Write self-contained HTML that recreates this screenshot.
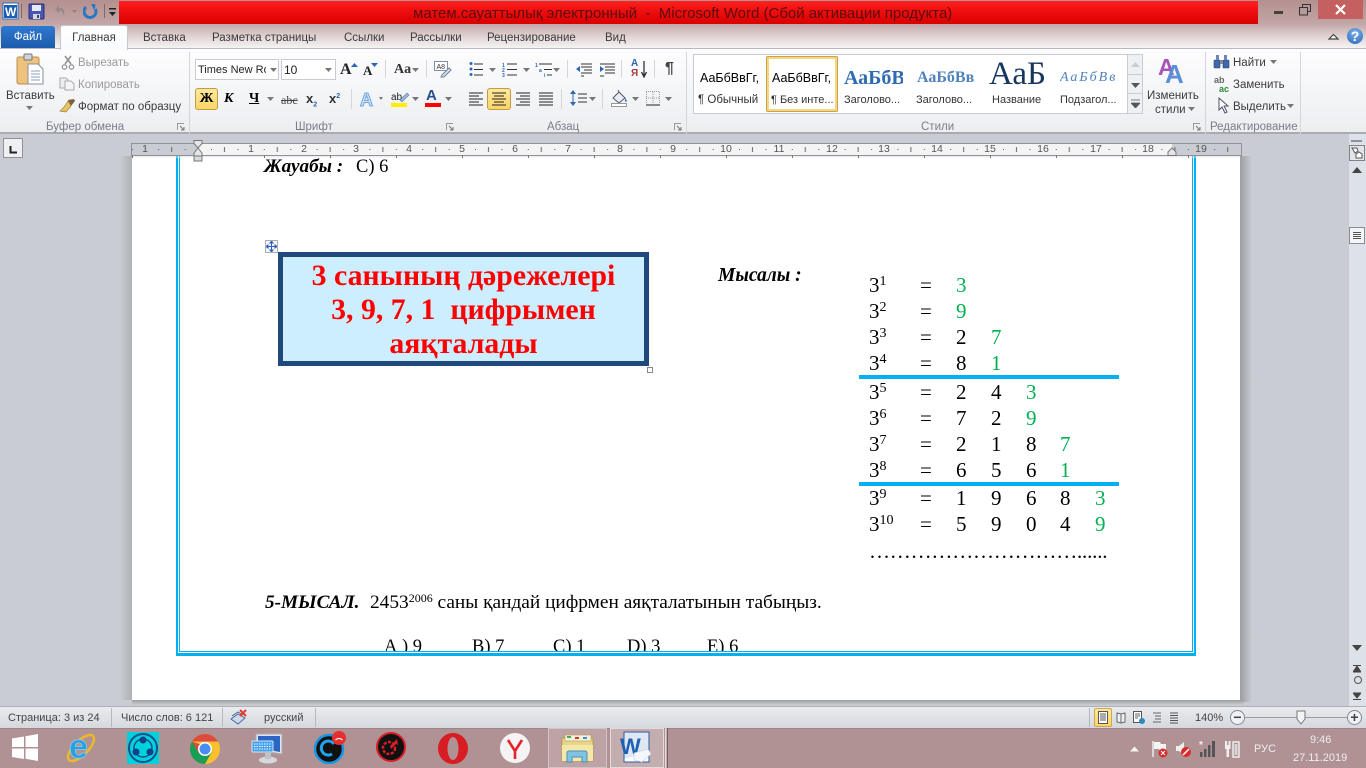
<!DOCTYPE html>
<html lang="ru"><head><meta charset="utf-8"><title>Word</title>
<style>
html,body{margin:0;padding:0;width:1366px;height:768px;overflow:hidden;background:#c9ccd2}
body{position:relative;font-family:"Liberation Sans","DejaVu Sans",sans-serif;font-size:11.5px;color:#3b3b3b}
.a,.t,svg{position:absolute}
.t{white-space:nowrap;line-height:14px}
.g{color:#9a9a9a}
.s{font-family:"Liberation Serif",serif;color:#000;white-space:nowrap;position:absolute;line-height:24px}
.n{font-size:21px}
.n sup{font-size:14px;line-height:0;vertical-align:7px}
.gr{color:#00b050}
.rn{position:absolute;top:143px;font-size:10.5px;line-height:12px;width:16px;text-align:center;color:#555}
.dv{position:absolute;top:52px;height:82px;width:1px;background:#d4d6da}
.lab{position:absolute;top:120px;line-height:14px;font-size:11.5px;color:#7a7e85;white-space:nowrap}
.st{position:absolute;top:93px;line-height:14px;font-size:11.500px;color:#333;white-space:nowrap}
.ch{position:absolute;top:70px;line-height:16px;font-size:12.500px;color:#000;white-space:nowrap}
</style></head><body>

<!-- title + tab band -->
<div class="a" style="left:0;top:0;width:1366px;height:48px;background:linear-gradient(#b4908f 0,#c2a6a6 24px,#e0d2d2 36px,#f5f3f3 48px)"></div>
<div class="a" style="left:119px;top:1px;width:1139px;height:23px;background:linear-gradient(#ff2020,#f01010 40%,#d80000)"></div>
<div class="t" style="left:413px;top:5px;font-size:15px;line-height:17px;color:#5b0d0d">матем.сауаттылық электронный&nbsp; -&nbsp; Microsoft Word (Сбой активации продукта)</div>

<!-- QAT -->
<svg style="left:2px;top:2px" width="22" height="20" viewBox="0 0 22 20"><rect x="1" y="1" width="15" height="16" fill="#fff" stroke="#2a6fb8"/><rect x="2" y="3" width="13" height="13" fill="#1d5fae"/><text x="3" y="14" font-family="Liberation Sans" font-weight="bold" font-size="12" fill="#fff">W</text></svg>
<div class="a" style="left:21px;top:4px;width:1px;height:14px;background:#7d6a6a"></div>
<svg style="left:28px;top:3px" width="17" height="17" viewBox="0 0 17 17"><rect x="1" y="1" width="15" height="15" rx="1" fill="#4a55b8" stroke="#2b2f70"/><rect x="4" y="2" width="9" height="6" fill="#e6ecf6"/><rect x="5" y="11" width="7" height="5" fill="#d2d6e0"/><rect x="9" y="12" width="2" height="3" fill="#3b3f78"/></svg>
<svg style="left:52px;top:4px" width="26" height="14" viewBox="0 0 26 14"><path d="M3 5 L7 1 V4 C12 3 13 7 12 13 C11 8 10 7 7 7 V10Z" fill="#9a8a8c"/><path d="M20 6h5l-2.500 3z" fill="#94807f"/></svg>
<svg style="left:83px;top:4px" width="15" height="15" viewBox="0 0 15 15"><path d="M3 3 A6 6 0 1 0 12.500 5" fill="none" stroke="#2a76c6" stroke-width="3"/><path d="M7 0 L12 0 L12 6Z" fill="#2a76c6" transform="rotate(15 10 3)"/></svg>
<div class="a" style="left:104px;top:4px;width:1px;height:14px;background:#7d6a6a"></div>
<svg style="left:108px;top:8px" width="10" height="9" viewBox="0 0 10 9"><rect x="1" y="0" width="7" height="1.500" fill="#222"/><path d="M1 4h7L4.500 8z" fill="#222"/></svg>

<!-- window buttons -->
<div class="a" style="left:1274px;top:11px;width:9px;height:3px;background:#443"></div>
<svg style="left:1299px;top:4px" width="14" height="12" viewBox="0 0 14 12"><rect x="3.500" y="0.500" width="8" height="7" fill="none" stroke="#333"/><rect x="0.500" y="3.500" width="8" height="7.500" fill="#b69a9a" stroke="#333" stroke-width="1"/></svg>
<div class="a" style="left:1318px;top:0;width:45px;height:19px;background:#c4605f"></div>
<svg style="left:1334px;top:4px" width="13" height="11" viewBox="0 0 13 11"><path d="M2 1 L11 10 M11 1 L2 10" stroke="#fff" stroke-width="2.200"/></svg>
<svg style="left:1328px;top:33px" width="11" height="8" viewBox="0 0 11 8"><path d="M1 6 L5.500 1.500 L10 6Z" fill="#fff" stroke="#444" stroke-width="1.200"/></svg>
<div class="a" style="left:1347px;top:28px;width:16px;height:16px;border-radius:50%;background:radial-gradient(circle at 50% 30%,#7fb0e8,#2a66b8);text-align:center;color:#fff;font:bold 14px/16px 'Liberation Sans'">?</div>

<!-- tabs -->
<div class="a" style="left:1px;top:26px;width:54px;height:22px;border-radius:3px 3px 0 0;background:linear-gradient(#2f79d0,#1c5cab);color:#fff;font-size:11.5px;line-height:23px;text-align:center">Файл</div>
<div class="a" style="left:60px;top:25px;width:66px;height:24px;border:1px solid #c4c7cc;border-bottom:0;border-radius:3px 3px 0 0;background:linear-gradient(#fff,#f9fafb);line-height:25px;text-align:center;color:#3b3b3b;z-index:2">Главная</div>
<div class="t" style="left:143px;top:31px">Вставка</div>
<div class="t" style="left:212px;top:31px">Разметка страницы</div>
<div class="t" style="left:344px;top:31px">Ссылки</div>
<div class="t" style="left:410px;top:31px">Рассылки</div>
<div class="t" style="left:487px;top:31px">Рецензирование</div>
<div class="t" style="left:605px;top:31px">Вид</div>

<!-- ribbon -->
<div class="a" style="left:0;top:48px;width:1366px;height:86px;background:linear-gradient(#fdfdfe,#f3f4f6 60%,#eceef1);border-top:1px solid #b6bac0;box-sizing:border-box;border-bottom:2px solid #a8abb0"></div>
<div class="dv" style="left:189px"></div><div class="dv" style="left:686px"></div><div class="dv" style="left:1205px"></div><div class="dv" style="left:1300px"></div>

<!-- clipboard -->
<svg style="left:15px;top:53px" width="30" height="34" viewBox="0 0 30 34"><rect x="2" y="4" width="22" height="27" rx="2" fill="#edc27c" stroke="#b98c4c"/><rect x="9" y="1" width="8" height="6" rx="1" fill="#cfd3da" stroke="#777"/><path d="M13 11h10l5 5v15H13z" fill="#fff" stroke="#8a8f98"/><path d="M16 18h9M16 21h9M16 24h9M16 27h9" stroke="#8aa0bd"/></svg>
<div class="t" style="left:6px;top:89px;font-size:11.500px">Вставить</div>
<svg style="left:26px;top:106px" width="7" height="5"><path d="M0 0h7L3.500 4z" fill="#777"/></svg>
<svg style="left:61px;top:55px" width="14" height="15" viewBox="0 0 14 15"><path d="M4 1l6 8M10 1L4 9" stroke="#8f8f8f" stroke-width="1.500"/><circle cx="3.500" cy="12" r="2.200" fill="none" stroke="#999" stroke-width="1.300"/><circle cx="10.500" cy="12" r="2.200" fill="none" stroke="#999" stroke-width="1.300"/></svg>
<div class="t g" style="left:78px;top:56px">Вырезать</div>
<svg style="left:59px;top:77px" width="16" height="14" viewBox="0 0 16 14"><path d="M1 1h6l2 2v8H1z" fill="#eee" stroke="#aaa"/><path d="M6 4h6l3 3v6H6z" fill="#f5f5f5" stroke="#aaa"/></svg>
<div class="t g" style="left:78px;top:78px">Копировать</div>
<svg style="left:59px;top:98px" width="17" height="16" viewBox="0 0 17 16"><path d="M9 2l6-1 1 2-4 5z" fill="#7d5f3d"/><path d="M9 3l3 5-5 6-6-1c3-2 5-5 8-10z" fill="#e8c563" stroke="#9c7f3a" stroke-width=".7"/></svg>
<div class="t" style="left:78px;top:100px;font-size:11.5px">Формат по образцу</div>
<div class="lab" style="left:46px">Буфер обмена</div>
<svg style="left:177px;top:123px" width="8" height="8"><path d="M0.500 7V.5H7" fill="none" stroke="#999"/><path d="M3 3l4 4M7 4v3H4" fill="none" stroke="#777"/></svg>

<!-- font -->
<div class="a" style="left:195px;top:59px;width:84px;height:21px;border:1px solid #c8ccd2;background:#fff;box-sizing:border-box"></div>
<div class="a" style="left:281px;top:59px;width:55px;height:21px;border:1px solid #c8ccd2;background:#fff;box-sizing:border-box"></div>
<div class="t" style="left:198px;top:63px;color:#222;font-size:11px;width:68px;overflow:hidden">Times New Roman</div>
<div class="t" style="left:284px;top:63px;color:#222;font-size:12px">10</div>
<svg style="left:270px;top:68px" width="7" height="4"><path d="M0 0h7L3.500 4z" fill="#777"/></svg>
<svg style="left:325px;top:68px" width="7" height="4"><path d="M0 0h7L3.500 4z" fill="#777"/></svg>
<div class="s" style="left:340px;top:58px;font-size:16px;font-weight:bold;color:#222">A</div>
<svg style="left:351px;top:63px" width="7" height="5"><path d="M0 4L3.500 0 7 4z" fill="#2b65b5"/></svg>
<div class="s" style="left:363px;top:59px;font-size:13px;font-weight:bold;color:#222">A</div>
<svg style="left:371px;top:63px" width="7" height="5"><path d="M0 0h7L3.500 4z" fill="#2b65b5"/></svg>
<div class="a" style="left:385px;top:60px;width:1px;height:18px;background:#d4d6da"></div>
<div class="s" style="left:394px;top:58px;font-size:14px;font-weight:bold;color:#333">Aa</div>
<svg style="left:412px;top:68px" width="7" height="4"><path d="M0 0h7L3.500 4z" fill="#777"/></svg>
<div class="a" style="left:426px;top:60px;width:1px;height:18px;background:#d4d6da"></div>
<svg style="left:434px;top:61px" width="18" height="17" viewBox="0 0 18 17"><rect x=".5" y=".5" width="13" height="9" fill="#fff" stroke="#7c8fa8"/><path d="M8 14l7-7 2 2-7 7H7z" fill="#dbe3ee" stroke="#6f8199"/><text x="2.500" y="8" font-size="7" font-family="Liberation Sans" fill="#333">A8</text></svg>

<div class="a" style="left:195px;top:88px;width:23px;height:22px;border:1px solid #c39a45;border-radius:3px;background:linear-gradient(#fde99b,#fdd568);box-sizing:border-box;text-align:center;font:bold 14px/20px 'Liberation Serif';color:#000">Ж</div>
<div class="s" style="left:224px;top:87px;font:italic bold 14px/24px 'Liberation Serif'">К</div>
<div class="s" style="left:249px;top:87px;font:bold 14px/24px 'Liberation Serif';text-decoration:underline">Ч</div>
<svg style="left:267px;top:97px" width="7" height="4"><path d="M0 0h7L3.500 4z" fill="#777"/></svg>
<div class="s" style="left:281px;top:88px;font-size:12px;color:#444;text-decoration:line-through">abc</div>
<div class="s" style="left:306px;top:87px;font:bold 13px/24px 'Liberation Sans';color:#333">x<sub style="font-size:7px;color:#2b65b5">2</sub></div>
<div class="s" style="left:329px;top:87px;font:bold 13px/24px 'Liberation Sans';color:#333">x<sup style="font-size:7px;color:#2b65b5;vertical-align:5px;line-height:0">2</sup></div>
<div class="a" style="left:351px;top:89px;width:1px;height:20px;background:#d4d6da"></div>
<svg style="left:359px;top:89px" width="24" height="20" viewBox="0 0 24 20"><text x="1" y="17" font-family="Liberation Sans" font-weight="bold" font-size="18" fill="#cfe4f8" stroke="#6ea6de" stroke-width="1">A</text><path d="M20 8h4l-2 3z" fill="#777"/></svg>
<svg style="left:390px;top:90px" width="26" height="18" viewBox="0 0 26 18"><text x="1" y="10" font-family="Liberation Sans" font-size="10" fill="#222">ab</text><path d="M10 10l7-7 2 2-7 7z" fill="#9db7d8" stroke="#5d7ca5" stroke-width=".6"/><rect x="1" y="13" width="16" height="4" fill="#ffee00"/></svg>
<svg style="left:412px;top:97px" width="7" height="4"><path d="M0 0h7L3.500 4z" fill="#777"/></svg>
<div class="s" style="left:426px;top:85px;font:bold 15px/22px 'Liberation Sans';color:#2a4f8a">A</div>
<div class="a" style="left:425px;top:103px;width:16px;height:4px;background:#f00"></div>
<svg style="left:445px;top:97px" width="7" height="4"><path d="M0 0h7L3.500 4z" fill="#777"/></svg>
<div class="lab" style="left:295px">Шрифт</div>
<svg style="left:446px;top:123px" width="8" height="8"><path d="M0.500 7V.5H7" fill="none" stroke="#999"/><path d="M3 3l4 4M7 4v3H4" fill="none" stroke="#777"/></svg>

<!-- paragraph -->
<svg style="left:468px;top:62px" width="16" height="15" viewBox="0 0 16 15"><path d="M3 1.500h0M3 7h0M3 12.500h0" stroke="#2b65b5" stroke-width="3" stroke-linecap="round"/><path d="M6 2h9M6 7.500h9M6 13h9" stroke="#333"/></svg>
<svg style="left:489px;top:68px" width="7" height="4"><path d="M0 0h7L3.500 4z" fill="#777"/></svg>
<svg style="left:502px;top:62px" width="16" height="15" viewBox="0 0 16 15"><text x="0" y="5" font-size="5" font-weight="bold" font-family="Liberation Sans" fill="#2b65b5">1</text><text x="0" y="10" font-size="5" font-weight="bold" font-family="Liberation Sans" fill="#2b65b5">2</text><text x="0" y="15" font-size="5" font-weight="bold" font-family="Liberation Sans" fill="#2b65b5">3</text><path d="M5 2h10M5 7.500h10M5 13h10" stroke="#333"/></svg>
<svg style="left:523px;top:68px" width="7" height="4"><path d="M0 0h7L3.500 4z" fill="#777"/></svg>
<svg style="left:535px;top:62px" width="18" height="15" viewBox="0 0 18 15"><text x="0" y="5" font-size="5" font-weight="bold" font-family="Liberation Sans" fill="#2b65b5">1</text><text x="4" y="10" font-size="5" font-weight="bold" font-family="Liberation Sans" fill="#2b65b5">a</text><text x="9" y="15" font-size="5" font-weight="bold" font-family="Liberation Sans" fill="#2b65b5">i</text><path d="M4 2h13M9 7.500h8M12 13h5" stroke="#333"/></svg>
<svg style="left:553px;top:68px" width="7" height="4"><path d="M0 0h7L3.500 4z" fill="#777"/></svg>
<div class="a" style="left:567px;top:60px;width:1px;height:18px;background:#d4d6da"></div>
<svg style="left:576px;top:62px" width="17" height="15" viewBox="0 0 17 15"><path d="M5 2h11M5 5h11M8 8h8M5 11h11M5 14h3" stroke="#333"/><path d="M0 7l4-3v6z" fill="#2b65b5"/></svg>
<svg style="left:599px;top:62px" width="17" height="15" viewBox="0 0 17 15"><path d="M1 2h15M6 5h10M6 8h10M6 11h10M1 14h4" stroke="#333"/><path d="M5 7L1 4v6z" fill="#2b65b5"/></svg>
<div class="a" style="left:621px;top:60px;width:1px;height:18px;background:#d4d6da"></div>
<div class="t" style="left:631px;top:59px;font:bold 10px/10px 'Liberation Sans';color:#2b65b5">A</div>
<div class="t" style="left:631px;top:69px;font:bold 10px/10px 'Liberation Sans';color:#a23b3b">Я</div>
<svg style="left:641px;top:61px" width="6" height="17"><path d="M3 0v14M0.500 11L3 16 5.500 11" stroke="#222" fill="none" stroke-width="1.200"/></svg>
<div class="a" style="left:654px;top:60px;width:1px;height:18px;background:#d4d6da"></div>
<div class="t" style="left:665px;top:60px;font:bold 16px/18px 'Liberation Sans';color:#444">¶</div>

<svg style="left:468px;top:91px" width="80" height="15" viewBox="0 0 80 15"><path d="M1 2h14M1 5h10M1 8h14M1 11h10M1 14h14" stroke="#222"/><path d="M48 2h14M52 5h10M48 8h14M52 11h10M48 14h14" stroke="#222"/></svg>
<div class="a" style="left:487px;top:88px;width:24px;height:22px;border:1px solid #c39a45;border-radius:3px;background:linear-gradient(#fde99b,#fdd568);box-sizing:border-box"></div>
<svg style="left:491px;top:91px" width="16" height="15" viewBox="0 0 16 15"><path d="M1 2h14M3 5h10M1 8h14M3 11h10M1 14h14" stroke="#222"/></svg>
<svg style="left:538px;top:91px" width="16" height="15" viewBox="0 0 16 15"><path d="M1 2h14M1 5h14M1 8h14M1 11h14M1 14h14" stroke="#222"/></svg>
<div class="a" style="left:561px;top:89px;width:1px;height:20px;background:#d4d6da"></div>
<svg style="left:570px;top:90px" width="18" height="17" viewBox="0 0 18 17"><path d="M3 1v14" stroke="#2b65b5"/><path d="M0 4l3-4 3 4zM0 12l3 4 3-4z" fill="#2b65b5"/><path d="M8 4h9M8 8h9M8 12h9" stroke="#333"/></svg>
<svg style="left:589px;top:97px" width="7" height="4"><path d="M0 0h7L3.500 4z" fill="#777"/></svg>
<div class="a" style="left:602px;top:89px;width:1px;height:20px;background:#d4d6da"></div>
<svg style="left:611px;top:90px" width="17" height="17" viewBox="0 0 17 17"><path d="M2 8l6-6 6 6-6 5z" fill="#e9eef5" stroke="#556"/><path d="M8 2l-1-2" stroke="#556"/><path d="M14 8c2 2 2 4 1 4s-1-2-1-4" fill="#2b65b5"/><rect x=".5" y="13.500" width="15" height="3" fill="#fff" stroke="#999"/></svg>
<svg style="left:632px;top:97px" width="7" height="4"><path d="M0 0h7L3.500 4z" fill="#777"/></svg>
<svg style="left:646px;top:91px" width="14" height="15" viewBox="0 0 14 15"><path d="M.5 1v12M7 1v12M13.500 1v12M0 .5h14M0 7h14" stroke="#999" stroke-dasharray="1 1"/><path d="M0 14h14" stroke="#222"/></svg>
<svg style="left:665px;top:97px" width="7" height="4"><path d="M0 0h7L3.500 4z" fill="#777"/></svg>
<div class="lab" style="left:547px">Абзац</div>
<svg style="left:674px;top:123px" width="8" height="8"><path d="M0.500 7V.5H7" fill="none" stroke="#999"/><path d="M3 3l4 4M7 4v3H4" fill="none" stroke="#777"/></svg>

<!-- styles gallery -->
<div class="a" style="left:693px;top:54px;width:450px;height:60px;border:1px solid #c8ccd2;background:#fff;box-sizing:border-box"></div>
<div class="a" style="left:766px;top:56px;width:72px;height:56px;border:3px solid #f7d77e;outline:1px solid #c9a24d;outline-offset:-1px;box-sizing:border-box;border-radius:2px"></div>
<div class="ch" style="left:700px">АаБбВвГг,</div>
<div class="ch" style="left:772px">АаБбВвГг,</div>
<div class="ch" style="left:844px;width:59px;overflow:hidden;font:bold 20px/16px 'Liberation Serif';color:#2e6bb0">АаБбВв</div>
<div class="ch" style="left:917px;width:58px;overflow:hidden;font:bold 16px/16px 'Liberation Serif';color:#4f81bd">АаБбВвГ</div>
<div class="ch" style="left:989px;top:58px;width:57px;overflow:hidden;font:33px/32px 'Liberation Serif';color:#17365d">АаБ</div>
<div class="ch" style="left:1060px;width:58px;overflow:hidden;font:italic 14px/16px 'Liberation Serif';letter-spacing:2px;color:#4f81bd">АаБбВв.</div>
<div class="st" style="left:698px">¶ Обычный</div>
<div class="st" style="left:771px;font-size:11px">¶ Без инте...</div>
<div class="st" style="left:844px;font-size:11px">Заголово...</div>
<div class="st" style="left:916px;font-size:11px">Заголово...</div>
<div class="st" style="left:992px;font-size:11px">Название</div>
<div class="st" style="left:1060px;font-size:11px">Подзагол...</div>
<div class="a" style="left:1127px;top:54px;width:16px;height:60px;background:#eef0f3;border:1px solid #c8ccd2;box-sizing:border-box"></div>
<div class="a" style="left:1127px;top:74px;width:16px;height:20px;border-top:1px solid #c8ccd2;border-bottom:1px solid #c8ccd2;box-sizing:border-box"></div>
<svg style="left:1131px;top:62px" width="9" height="46" viewBox="0 0 9 46"><path d="M0 5L4.500 0 9 5z" fill="#ccc"/><path d="M0 21h9L4.500 26z" fill="#555"/><path d="M0 38h9M0 41h9L4.500 46z" stroke="#555" fill="#555" stroke-width=".8"/></svg>
<svg style="left:1157px;top:54px" width="33" height="30" viewBox="0 0 33 30"><text x="1" y="21" font-family="Liberation Sans" font-weight="bold" font-size="23" fill="#a855b8">A</text><text x="8" y="29" font-family="Liberation Sans" font-weight="bold" font-size="26" fill="#5d8fd6">A</text></svg>
<div class="t" style="left:1147px;top:89px;font-size:11.5px">Изменить</div>
<div class="t" style="left:1155px;top:103px;font-size:11.5px">стили</div>
<svg style="left:1188px;top:107px" width="7" height="4"><path d="M0 0h7L3.500 4z" fill="#777"/></svg>
<div class="lab" style="left:921px">Стили</div>
<svg style="left:1193px;top:123px" width="8" height="8"><path d="M0.500 7V.5H7" fill="none" stroke="#999"/><path d="M3 3l4 4M7 4v3H4" fill="none" stroke="#777"/></svg>

<!-- edit -->
<svg style="left:1213px;top:54px" width="17" height="15" viewBox="0 0 17 15"><rect x="1" y="6" width="6" height="8" rx="1" fill="#3f68ad" stroke="#2a3f70" stroke-width=".6"/><rect x="10" y="6" width="6" height="8" rx="1" fill="#3f68ad" stroke="#2a3f70" stroke-width=".6"/><rect x="3" y="1" width="3" height="5" fill="#6d86b5"/><rect x="11" y="1" width="3" height="5" fill="#6d86b5"/><rect x="7" y="6" width="3" height="4" fill="#889"/></svg>
<div class="t" style="left:1233px;top:56px">Найти</div>
<svg style="left:1270px;top:60px" width="7" height="4"><path d="M0 0h7L3.500 4z" fill="#777"/></svg>
<div class="t" style="left:1214px;top:76px;font:bold 9px/9px 'Liberation Sans';color:#666">ab</div>
<div class="t" style="left:1219px;top:85px;font:bold 9px/9px 'Liberation Sans';color:#2a8a3a">ac</div>
<div class="t" style="left:1233px;top:78px">Заменить</div>
<svg style="left:1217px;top:97px" width="14" height="17" viewBox="0 0 14 17"><path d="M2 1v12l3-3 3 6 2-1-3-6h4z" fill="#fff" stroke="#4a5568"/></svg>
<div class="t" style="left:1233px;top:100px">Выделить</div>
<svg style="left:1287px;top:104px" width="7" height="4"><path d="M0 0h7L3.500 4z" fill="#777"/></svg>
<div class="lab" style="left:1210px">Редактирование</div>

<!-- ruler -->
<div class="a" style="left:0;top:134px;width:1366px;height:22px;background:#c9ccd2"></div>
<div class="a" style="left:3px;top:138px;width:20px;height:20px;border:1px solid #8f9399;background:#eef0f3;box-sizing:border-box"></div>
<svg style="left:9px;top:146px" width="9" height="8"><path d="M1.500 0v6.500H8" fill="none" stroke="#222" stroke-width="2"/></svg>
<div class="a" style="left:131px;top:143px;width:1111px;height:13px;border:1px solid #8f9399;box-sizing:border-box;background:#c9ccd2"></div>
<div class="a" style="left:198px;top:144px;width:974px;height:11px;background:#f4f4f4"></div>
<svg style="left:132px;top:144px" width="1108" height="11" viewBox="0 0 1108 11"><defs><pattern id="rp" x="66" y="0" width="52.800" height="11" patternUnits="userSpaceOnUse"><rect x="13" y="5" width="1" height="1" fill="#555"/><rect x="26" y="3" width="1" height="5" fill="#666"/><rect x="39.500" y="5" width="1" height="1" fill="#555"/></pattern></defs><rect width="1108" height="11" fill="url(#rp)"/></svg>
<span class="rn" style="left:137px">1</span><span class="rn" style="left:243px">1</span><span class="rn" style="left:296px">2</span><span class="rn" style="left:348px">3</span><span class="rn" style="left:401px">4</span><span class="rn" style="left:454px">5</span><span class="rn" style="left:507px">6</span><span class="rn" style="left:560px">7</span><span class="rn" style="left:612px">8</span><span class="rn" style="left:665px">9</span><span class="rn" style="left:718px">10</span><span class="rn" style="left:771px">11</span><span class="rn" style="left:824px">12</span><span class="rn" style="left:876px">13</span><span class="rn" style="left:929px">14</span><span class="rn" style="left:982px">15</span><span class="rn" style="left:1035px">16</span><span class="rn" style="left:1088px">17</span><span class="rn" style="left:1140px">18</span><span class="rn" style="left:1193px">19</span>

<!-- page -->
<div class="a" style="left:1240px;top:156px;width:12px;height:546px;background:linear-gradient(90deg,#9a9da2,#c9ccd2)"></div>
<div class="a" style="left:132px;top:700px;width:1112px;height:5px;background:linear-gradient(#9a9da2,#c9ccd2)"></div>
<div class="a" style="left:120px;top:156px;width:12px;height:544px;background:linear-gradient(270deg,#adb0b5,#c9ccd2)"></div>
<div class="a" style="left:132px;top:156px;width:1108px;height:544px;background:#fff;overflow:hidden">
 <div class="a" style="left:44px;top:-10px;width:1020px;height:510px;border:2px solid #00b0f0;border-bottom-width:3px;box-sizing:border-box"></div>
 <div class="a" style="left:47px;top:-10px;width:1014px;height:506px;border:1px solid #00b0f0;box-sizing:border-box"></div>
</div>
<div class="a" style="left:132px;top:156px;width:1108px;height:2px;background:linear-gradient(#c0c3c8,#fff);opacity:.4"></div>
<svg style="left:132px;top:155px" width="1108" height="4" viewBox="0 0 1108 4"><defs><pattern id="tb" x="132" y="0" width="66" height="4" patternUnits="userSpaceOnUse"><rect x="0" y="0" width="1" height="3" fill="#777"/></pattern></defs><rect width="1108" height="4" fill="url(#tb)"/></svg>
<svg style="left:193px;top:140px" width="11" height="22" viewBox="0 0 11 22"><path d="M1 .5h8v3L5 8 1 3.500z" fill="#e4e6e9" stroke="#777"/><path d="M5 8l4 5v3H1v-3z" fill="#e4e6e9" stroke="#777"/><rect x="1" y="16" width="8" height="5" fill="#d8dade" stroke="#777"/></svg>
<svg style="left:1167px;top:147px" width="11" height="9" viewBox="0 0 11 9"><path d="M1 8.500V5l4-4 4 4v3.500z" fill="#e4e6e9" stroke="#777"/></svg>

<div class="s" style="left:264px;top:156px;font-size:19.200px;line-height:22px;font-weight:bold;font-style:italic">Жауабы :</div>
<div class="s" style="left:356px;top:156px;font-size:18.500px;line-height:22px">С) 6</div>

<!-- box -->
<div class="a" style="left:265px;top:240px;width:13px;height:13px;border:1px solid #a9acb0;box-sizing:border-box;background:#f4f5f7"></div>
<svg style="left:266px;top:241px" width="11" height="11" viewBox="0 0 11 11"><path d="M5.500 0v11M0 5.500h11M5.500 0L4 2h3zM5.500 11L4 9h3zM0 5.500L2 4v3zM11 5.500L9 4v3z" stroke="#2f5fc0" fill="#2f5fc0" stroke-width="1"/></svg>
<div class="a" style="left:278px;top:252px;width:371px;height:114px;border:5px solid #1f497d;box-sizing:border-box;background:#cceeff"></div>
<div class="s" style="left:283px;width:361px;top:259px;text-align:center;font-size:29.800px;line-height:34px;font-weight:bold;color:#f00;white-space:normal">3 санының дәрежелері<br>3, 9, 7, 1&nbsp; цифрымен<br>аяқталады</div>
<div class="a" style="left:647px;top:367px;width:6px;height:6px;border:1px solid #888;background:#fff;box-sizing:border-box"></div>

<div class="s" style="left:718px;top:265px;font-size:19.500px;line-height:22px;font-weight:bold;font-style:italic">Мысалы :</div>

<!-- table -->
<div class="s n" style="left:869px;top:273px">3<sup>1</sup></div><div class="s n" style="left:920px;top:273px">=</div><div class="s n gr" style="left:956px;top:273px">3</div>
<div class="s n" style="left:869px;top:299px">3<sup>2</sup></div><div class="s n" style="left:920px;top:299px">=</div><div class="s n gr" style="left:956px;top:299px">9</div>
<div class="s n" style="left:869px;top:325px">3<sup>3</sup></div><div class="s n" style="left:920px;top:325px">=</div><div class="s n" style="left:956px;top:325px">2</div><div class="s n gr" style="left:991px;top:325px">7</div>
<div class="s n" style="left:869px;top:351px">3<sup>4</sup></div><div class="s n" style="left:920px;top:351px">=</div><div class="s n" style="left:956px;top:351px">8</div><div class="s n gr" style="left:991px;top:351px">1</div>
<div class="a" style="left:859px;top:375px;width:260px;height:4px;background:#00b0f0"></div>
<div class="s n" style="left:869px;top:380px">3<sup>5</sup></div><div class="s n" style="left:920px;top:380px">=</div><div class="s n" style="left:956px;top:380px">2</div><div class="s n" style="left:991px;top:380px">4</div><div class="s n gr" style="left:1026px;top:380px">3</div>
<div class="s n" style="left:869px;top:406px">3<sup>6</sup></div><div class="s n" style="left:920px;top:406px">=</div><div class="s n" style="left:956px;top:406px">7</div><div class="s n" style="left:991px;top:406px">2</div><div class="s n gr" style="left:1026px;top:406px">9</div>
<div class="s n" style="left:869px;top:432px">3<sup>7</sup></div><div class="s n" style="left:920px;top:432px">=</div><div class="s n" style="left:956px;top:432px">2</div><div class="s n" style="left:991px;top:432px">1</div><div class="s n" style="left:1026px;top:432px">8</div><div class="s n gr" style="left:1060px;top:432px">7</div>
<div class="s n" style="left:869px;top:458px">3<sup>8</sup></div><div class="s n" style="left:920px;top:458px">=</div><div class="s n" style="left:956px;top:458px">6</div><div class="s n" style="left:991px;top:458px">5</div><div class="s n" style="left:1026px;top:458px">6</div><div class="s n gr" style="left:1060px;top:458px">1</div>
<div class="a" style="left:859px;top:482px;width:260px;height:4px;background:#00b0f0"></div>
<div class="s n" style="left:869px;top:486px">3<sup>9</sup></div><div class="s n" style="left:920px;top:486px">=</div><div class="s n" style="left:956px;top:486px">1</div><div class="s n" style="left:991px;top:486px">9</div><div class="s n" style="left:1026px;top:486px">6</div><div class="s n" style="left:1060px;top:486px">8</div><div class="s n gr" style="left:1095px;top:486px">3</div>
<div class="s n" style="left:869px;top:512px">3<sup>10</sup></div><div class="s n" style="left:920px;top:512px">=</div><div class="s n" style="left:956px;top:512px">5</div><div class="s n" style="left:991px;top:512px">9</div><div class="s n" style="left:1026px;top:512px">0</div><div class="s n" style="left:1060px;top:512px">4</div><div class="s n gr" style="left:1095px;top:512px">9</div>
<div class="s n" style="left:869px;top:539px;letter-spacing:-.2px">…………………………......</div>

<!-- 5-misal -->
<div class="s" style="left:265px;top:592px;font-size:19.200px;line-height:22px;font-weight:bold;font-style:italic">5-МЫСАЛ.</div>
<div class="s" style="left:370px;top:592px;font-size:19.350px;line-height:22px">2453<sup style="font-size:12px;line-height:0;vertical-align:6px">2006</sup> саны қандай цифрмен аяқталатынын табыңыз.</div>
<div class="a" style="left:180px;top:636px;width:1012px;height:15px;overflow:hidden">
<div class="s" style="left:204px;top:0;font-size:18.500px;line-height:22px">А ) 9</div>
<div class="s" style="left:292px;top:0;font-size:18.500px;line-height:22px">В) 7</div>
<div class="s" style="left:373px;top:0;font-size:18.500px;line-height:22px">С) 1</div>
<div class="s" style="left:447px;top:0;font-size:18.500px;line-height:22px">D) 3</div>
<div class="s" style="left:527px;top:0;font-size:18.500px;line-height:22px">Е) 6</div>
</div>

<!-- scrollbar -->
<div class="a" style="left:1349px;top:134px;width:17px;height:572px;background:#dde1e8"></div>
<div class="a" style="left:1351px;top:140px;width:11px;height:2px;background:#8f9399"></div>
<div class="a" style="left:1349px;top:145px;width:16px;height:16px;border:1px solid #7f8389;box-sizing:border-box;background:#e3e5e9"></div>
<svg style="left:1351px;top:147px" width="12" height="12" viewBox="0 0 12 12"><path d="M1 1h5l1 3-3 2zM5 7l3-2 3 2v4H5z" fill="#fff" stroke="#555"/></svg>
<svg style="left:1352px;top:167px" width="10" height="6"><path d="M0 6L5 0l5 6z" fill="#444"/></svg>
<div class="a" style="left:1349px;top:227px;width:16px;height:17px;border:1px solid #8a8e94;box-sizing:border-box;background:#f3f4f6"></div>
<svg style="left:1352px;top:232px" width="10" height="8"><path d="M1 .5h8M1 2.500h8M1 4.500h8M1 6.500h8" stroke="#555"/></svg>
<svg style="left:1352px;top:645px" width="10" height="6"><path d="M0 0h10L5 6z" fill="#444"/></svg>
<svg style="left:1353px;top:664px" width="8" height="9"><path d="M0 1.500h8M4 2L0 8h8z" stroke="#444" fill="#444"/></svg>
<div class="a" style="left:1354px;top:676px;width:6px;height:6px;border:1px solid #555;border-radius:50%"></div>
<svg style="left:1353px;top:692px" width="8" height="9"><path d="M4 6L0 1h8zM0 7.500h8" stroke="#444" fill="#444"/></svg>

<!-- status -->
<div class="a" style="left:0;top:706px;width:1366px;height:22px;background:linear-gradient(#e9ebef,#d5d8dd);border-top:1px solid #adb0b5;box-sizing:border-box"></div>
<div class="t" style="left:8px;top:711px;font-size:11px;color:#444">Страница: 3 из 24</div>
<div class="a" style="left:111px;top:708px;width:1px;height:19px;background:#b6b9be"></div>
<div class="t" style="left:121px;top:711px;font-size:11px;color:#444">Число слов: 6 121</div>
<div class="a" style="left:222px;top:708px;width:1px;height:19px;background:#b6b9be"></div>
<svg style="left:230px;top:708px" width="19" height="17" viewBox="0 0 19 17"><path d="M1 11l7-5 7 4-7 6z" fill="#cfd9ea" stroke="#486a9e"/><path d="M2 8l6-4 5 3" fill="none" stroke="#486a9e"/><path d="M10 2l6 6M16 2l-6 6" stroke="#e23b2e" stroke-width="2"/></svg>
<div class="t" style="left:264px;top:711px;font-size:11px;color:#444">русский</div>
<div class="a" style="left:315px;top:708px;width:1px;height:19px;background:#b6b9be"></div>
<div class="a" style="left:1089px;top:708px;width:1px;height:19px;background:#b6b9be"></div>
<div class="a" style="left:1094px;top:708px;width:18px;height:19px;border:1px solid #d0a64f;border-radius:2px;box-sizing:border-box;background:linear-gradient(#fde99b,#fdd568)"></div>
<svg style="left:1098px;top:711px" width="10" height="13"><rect x=".5" y=".5" width="9" height="12" fill="#fff" stroke="#555"/><path d="M2 3h6M2 5h6M2 7h6M2 9h6" stroke="#555"/></svg>
<svg style="left:1116px;top:711px" width="62" height="13" viewBox="0 0 62 13"><path d="M1 2l4 1 4-1v9l-4 1-4-1zM5 3v9" fill="#eef0f3" stroke="#666"/><rect x="17.500" y=".5" width="8" height="11" fill="#fff" stroke="#555"/><path d="M19 3h5M19 5h5M19 7h3" stroke="#666"/><circle cx="26" cy="10" r="3" fill="#2f8ac0"/><path d="M37 2h8M39 5h6M39 8h6M37 11h8" stroke="#666"/><path d="M54 2h8M54 4.500h8M54 7h8M54 9.500h8M54 12h8" stroke="#555"/></svg>
<div class="t" style="left:1195px;top:711px;font-size:11px;color:#444">140%</div>
<div class="a" style="left:1230px;top:717px;width:118px;height:1px;background:#9a9da2"></div>
<div class="a" style="left:1230px;top:710px;width:15px;height:15px;border:1px solid #7d8a9c;border-radius:50%;background:#f0f2f5;box-sizing:border-box;text-align:center;font:bold 14px/12px 'Liberation Sans';color:#444">−</div>
<div class="a" style="left:1347px;top:710px;width:15px;height:15px;border:1px solid #7d8a9c;border-radius:50%;background:#f0f2f5;box-sizing:border-box;text-align:center;font:bold 14px/13px 'Liberation Sans';color:#444">+</div>
<svg style="left:1296px;top:710px" width="10" height="15"><path d="M1 1h8v8l-4 5-4-5z" fill="#f3f4f6" stroke="#777"/></svg>

<!-- taskbar -->
<div class="a" style="left:0;top:728px;width:1366px;height:40px;background:#b09295;border-top:1px solid #9d8487;box-sizing:border-box"></div>
<svg style="left:11px;top:734px" width="28" height="27" viewBox="0 0 28 27"><path d="M1 4.500l12-2v10.500H1zM14.500 2.200L27 0v13H14.500zM1 14.500h12v10.500l-12-2zM14.500 14.500H27V27l-12.500-2.200z" fill="#fff"/></svg>
<svg style="left:66px;top:731px" width="32" height="33" viewBox="0 0 32 33"><ellipse cx="15" cy="17" rx="17" ry="7" transform="rotate(-45 15 17)" fill="none" stroke="#e8b92f" stroke-width="2.600"/><text x="3" y="27" font-family="Liberation Sans" font-weight="bold" font-size="34" fill="#2a9fe0" stroke="#7fd0f5" stroke-width=".7">e</text></svg>
<svg style="left:127px;top:732px" width="32" height="32" viewBox="0 0 32 32"><rect width="32" height="32" fill="#00d2dc"/><circle cx="16" cy="16" r="14" fill="none" stroke="#14508c" stroke-width="2"/><circle cx="16" cy="16" r="9" fill="none" stroke="#14508c" stroke-width="1.500"/><circle cx="16" cy="8" r="3.500" fill="#14408c"/><circle cx="9" cy="20" r="3.500" fill="#14408c"/><circle cx="23" cy="20" r="3.500" fill="#14408c"/></svg>
<svg style="left:190px;top:734px" width="30" height="30" viewBox="-15 -15 30 30"><circle r="15" fill="#fbc02d"/><path d="M-13 -7.500A15 15 0 0 1 13 -7.500L0 -7.500z" fill="#dd4b3e"/><path d="M-13 -7.500A15 15 0 0 0 -3 14.700L6.500 -1z" fill="#dd4b3e"/><path d="M-13 -7.500A15 15 0 0 0 0 15L6.500 3.500 L-6.500 3.500z" fill="#199e55"/><circle r="7" fill="#fff"/><circle r="5.500" fill="#4a8cf0"/></svg>
<svg style="left:251px;top:733px" width="32" height="31" viewBox="0 0 32 31"><path d="M5 1l26-0v20L5 17z" fill="#dfe4ea" stroke="#aab"/><path d="M7 3l22 0v16L7 15z" fill="#2b67c2"/><rect x="1" y="8" width="21" height="11" rx="1" fill="#4aa0ec" stroke="#cfe4f8"/><path d="M3 11h17M3 13.500h17M3 16h17" stroke="#dff" stroke-dasharray="1.500 1"/><ellipse cx="17" cy="27" rx="9" ry="3.500" fill="#d5d8dc"/><rect x="14" y="20" width="6" height="6" fill="#bfc3c8"/></svg>
<svg style="left:313px;top:731px" width="34" height="33" viewBox="0 0 34 33"><circle cx="16" cy="18" r="14" fill="#111" stroke="#1597e5" stroke-width="2.500"/><path d="M21 13A7 7 0 1 0 19 23" fill="none" stroke="#1fa5f0" stroke-width="3"/><circle cx="26" cy="7" r="7" fill="#e53030"/><path d="M22.500 9c2-2 5-2 7 0" stroke="#fff" fill="none"/></svg>
<svg style="left:376px;top:732px" width="30" height="30" viewBox="0 0 30 30"><circle cx="15" cy="15" r="14" fill="#111" stroke="#d81f26" stroke-width="2"/><circle cx="13" cy="16" r="6" fill="none" stroke="#d81f26" stroke-width="2.500" stroke-dasharray="3 1.500"/><path d="M14 14l7-7 1 6-2-1-5 5z" fill="#d81f26"/></svg>
<svg style="left:438px;top:733px" width="30" height="31" viewBox="0 0 30 31"><ellipse cx="15" cy="15.500" rx="15" ry="15.500" fill="#d81c24"/><ellipse cx="15" cy="15.500" rx="5.500" ry="11.500" fill="#b09295"/></svg>
<svg style="left:500px;top:733px" width="30" height="30" viewBox="0 0 30 30"><circle cx="15" cy="15" r="15" fill="#f5f3f3"/><path d="M8 7l7 11v8M22 7l-7 11" fill="none" stroke="#e3242b" stroke-width="2.600"/></svg>
<div class="a" style="left:548px;top:728px;width:59px;height:40px;background:#bda3a5;border:1px solid #d2c4c5;box-sizing:border-box"></div>
<svg style="left:561px;top:734px" width="34" height="29" viewBox="0 0 34 29"><path d="M1 4h31v23H1z" fill="#e8d58a" stroke="#b89b52"/><rect x="4" y="1" width="26" height="6" fill="#f5f0da" stroke="#b89b52" stroke-width=".6"/><rect x="6" y="2" width="4" height="2" fill="#3bb04a"/><rect x="14" y="3" width="4" height="2" fill="#c83a3a"/><rect x="22" y="3" width="4" height="2" fill="#3a8ed0"/><path d="M1 11h31v16H1z" fill="#f5e7a8"/><path d="M6 28V19a2 2 0 0 1 2-2h16a2 2 0 0 1 2 2v9h-5v-5H11v5z" fill="#7fc4e4" stroke="#4a8fb5"/></svg>
<div class="a" style="left:610px;top:728px;width:54px;height:40px;background:#c3adae;border:1px solid #e3dada;box-sizing:border-box"></div>
<div class="a" style="left:665px;top:728px;width:3px;height:40px;background:#c3adae;border-left:1px solid #e3dada;border-right:1px solid #6f6062;box-sizing:border-box"></div>
<svg style="left:620px;top:731px" width="32" height="33" viewBox="0 0 32 33"><path d="M4 1h25v30H4z" fill="#fff" stroke="#2a5fa8"/><path d="M4 1h25v20L4 28z" fill="#1f5fb4" opacity=".15"/><text x="0" y="23" font-family="Liberation Sans" font-weight="bold" font-size="22" fill="#1f5fb4">W</text><path d="M14 22l14-4 3 5-9 8-8-2z" fill="#f4f6fa" stroke="#c4cbd8" stroke-width=".6"/></svg>

<!-- tray -->
<svg style="left:1130px;top:746px" width="9" height="6"><path d="M0 5.500L4.500 .5 9 5.500z" fill="#f2f2f2"/></svg>
<svg style="left:1151px;top:740px" width="17" height="18" viewBox="0 0 17 18"><path d="M2 1v16" stroke="#eee" stroke-width="1.500"/><path d="M3 2h6l1 2h5v7H9L8 9H3z" fill="#f4f4f4"/><circle cx="12" cy="13" r="4.500" fill="#d92b2b"/><path d="M10 11l4 4M14 11l-4 4" stroke="#fff"/></svg>
<svg style="left:1175px;top:740px" width="17" height="18" viewBox="0 0 17 18"><path d="M1 6h3l5-4v13l-5-4H1z" fill="#eee"/><circle cx="11" cy="12" r="5" fill="#d92b2b"/><path d="M8 15l6-6" stroke="#fff" stroke-width="1.500"/></svg>
<svg style="left:1199px;top:739px" width="17" height="19" viewBox="0 0 17 19"><path d="M1 13h2.500v5H1zM5 10h2.500v8H5zM9 6h2.500v12H9zM13 2h3v16h-3z" fill="#555"/><text x="0" y="9" font-family="Liberation Sans" font-size="10" font-weight="bold" fill="#f2f2f2">*</text></svg>
<svg style="left:1224px;top:739px" width="16" height="19" viewBox="0 0 16 19"><rect x="1" y="2" width="2" height="4" fill="#eee"/><rect x="4.500" y="2" width="2" height="4" fill="#eee"/><path d="M1 6h5.500v4H5v8H2.500v-8H1z" fill="#eee"/><rect x="9" y="3" width="6" height="15" fill="none" stroke="#eee" stroke-width="1.500"/><rect x="10.500" y="5" width="3" height="11" fill="#eee" opacity=".7"/></svg>
<div class="t" style="left:1254px;top:742px;font-size:11px;color:#eee">РУС</div>
<div class="t" style="left:1310px;top:733px;font-size:11px;color:#eee">9:46</div>
<div class="t" style="left:1293px;top:751px;font-size:11px;color:#eee">27.11.2019</div>

</body></html>
